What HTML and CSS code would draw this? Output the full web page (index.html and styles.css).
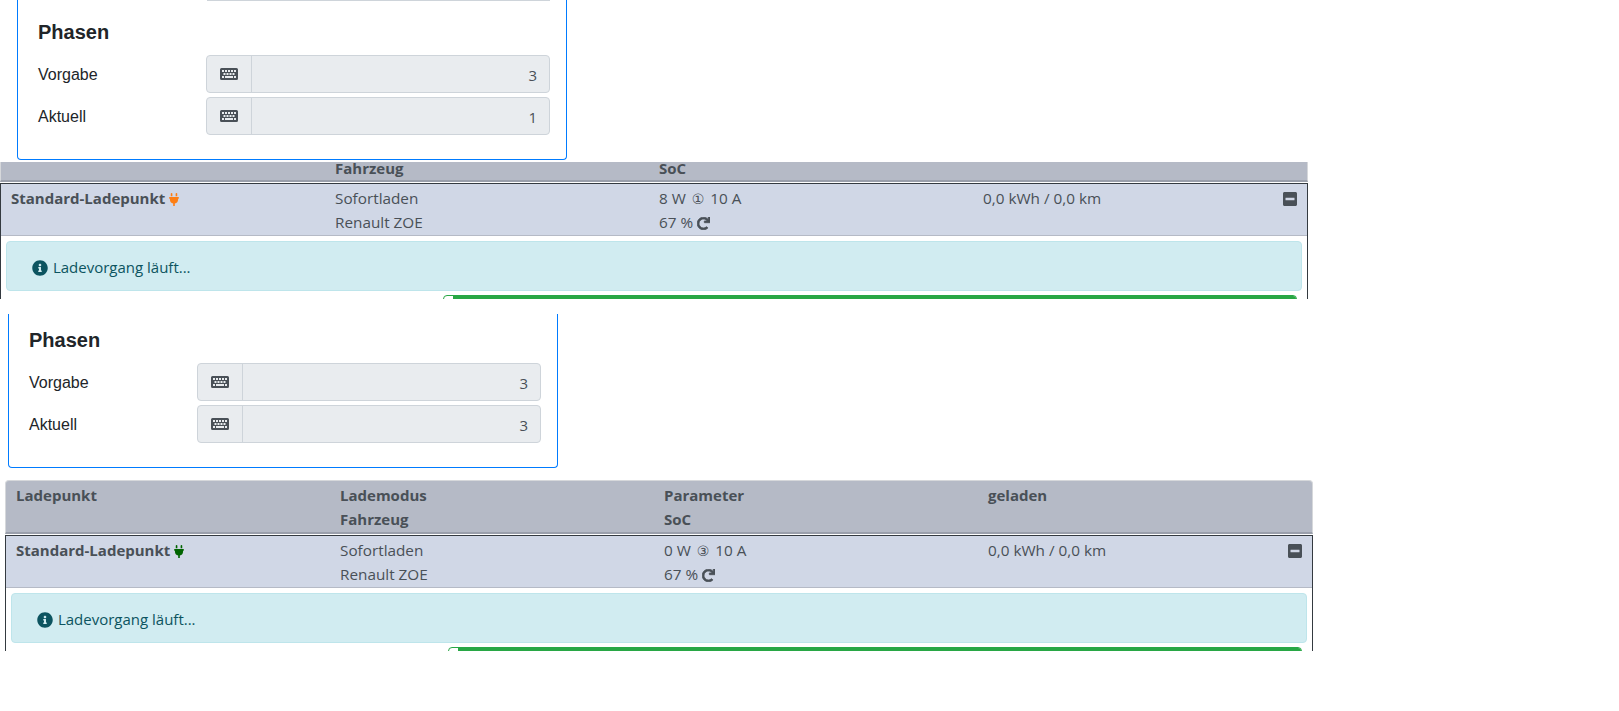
FILE: index.html
```html
<!DOCTYPE html>
<html lang="de">
<head>
    <meta charset="UTF-8">
    <meta name="viewport" content="width=device-width, initial-scale=1.0">
    <title>Ladepunkt</title>
    <link rel="stylesheet" href="styles.css">
</head>
<body>
    <svg class="icon-defs" aria-hidden="true">
        <symbol id="i-keyboard" viewBox="0 0 576 512">
            <path fill-rule="evenodd" d="M48 64h480a48 48 0 0 1 48 48v288a48 48 0 0 1-48 48H48a48 48 0 0 1-48-48V112a48 48 0 0 1 48-48zM64 128v64h64v-64zm96 0v64h64v-64zm96 0v64h64v-64zm96 0v64h64v-64zm96 0v64h64v-64zM112 224v64h64v-64zm96 0v64h64v-64zm96 0v64h64v-64zm96 0v64h64v-64zM64 320v64h64v-64zm96 0v64h256v-64zm288 0v64h64v-64z"/>
        </symbol>
        <symbol id="i-plug" viewBox="0 0 384 512">
            <path d="M320,32a32,32,0,0,0-64,0v96h64Zm48,128H16A16,16,0,0,0,0,176v32a16,16,0,0,0,16,16H32v32A160.07,160.07,0,0,0,160,412.8V512h64V412.8A160.07,160.07,0,0,0,352,256V224h16a16,16,0,0,0,16-16V176A16,16,0,0,0,368,160ZM128,32a32,32,0,0,0-64,0v96h64Z"/>
        </symbol>
        <symbol id="i-info" viewBox="0 0 512 512">
            <path d="M256 8C119.043 8 8 119.083 8 256c0 136.997 111.043 248 248 248s248-111.003 248-248C504 119.083 392.957 8 256 8zm0 110c23.196 0 42 18.804 42 42s-18.804 42-42 42-42-18.804-42-42 18.804-42 42-42zm56 254c0 6.627-5.373 12-12 12h-88c-6.627 0-12-5.373-12-12v-24c0-6.627 5.373-12 12-12h12v-64h-12c-6.627 0-12-5.373-12-12v-24c0-6.627 5.373-12 12-12h64c6.627 0 12 5.373 12 12v100h12c6.627 0 12 5.373 12 12v24z"/>
        </symbol>
        <symbol id="i-minus" viewBox="0 0 448 512">
            <path d="M400 32H48C21.5 32 0 53.5 0 80v352c0 26.5 21.5 48 48 48h352c26.5 0 48-21.5 48-48V80c0-26.5-21.5-48-48-48zM92 296c-6.6 0-12-5.4-12-12v-56c0-6.6 5.4-12 12-12h264c6.6 0 12 5.4 12 12v56c0 6.6-5.4 12-12 12H92z"/>
        </symbol>
        <symbol id="i-redo" viewBox="0 0 512 512">
            <path d="M500.33 0h-47.41a12 12 0 0 0-12 12.57l4 82.76A247.42 247.42 0 0 0 256 8C119.34 8 7.9 119.53 8 256.19 8.1 393.07 119.1 504 256 504a247.1 247.1 0 0 0 166.18-63.91 12 12 0 0 0 .48-17.43l-34-34a12 12 0 0 0-16.38-.55A176 176 0 1 1 402.1 157.8l-101.53-4.87a12 12 0 0 0-12.57 12v47.41a12 12 0 0 0 12 12h200.33a12 12 0 0 0 12-12V12a12 12 0 0 0-12-12z"/>
        </symbol>
    </svg>

    <!-- erster Ausschnitt -->
    <div class="shot shot-first">
        <div class="card">
            <div class="cut-input"></div>
            <h4>Phasen</h4>
            <div class="form-row">
                <label>Vorgabe</label>
                <div class="input-group">
                    <span class="prepend"><svg class="icon-kbd"><use href="#i-keyboard"/></svg></span>
                    <span class="value">3</span>
                </div>
            </div>
            <div class="form-row">
                <label>Aktuell</label>
                <div class="input-group">
                    <span class="prepend"><svg class="icon-kbd"><use href="#i-keyboard"/></svg></span>
                    <span class="value">1</span>
                </div>
            </div>
        </div>

        <div class="lp-table">
            <div class="lp-head lp-head-cut">
                <div class="lp-grid">
                    <div></div>
                    <div>Fahrzeug</div>
                    <div>SoC</div>
                    <div></div>
                </div>
            </div>
            <div class="lp-body">
                <div class="lp-row lp-grid">
                    <div class="lp-name">Standard-Ladepunkt <svg class="icon-plug plug-orange"><use href="#i-plug"/></svg></div>
                    <div>Sofortladen<br>Renault ZOE</div>
                    <div>8 W <span class="circled">①</span> 10 A<br>67 % <svg class="icon-redo"><use href="#i-redo"/></svg></div>
                    <div class="lp-last">0,0 kWh / 0,0 km <svg class="icon-minus"><use href="#i-minus"/></svg></div>
                </div>
                <div class="alert"><svg class="icon-info"><use href="#i-info"/></svg> Ladevorgang läuft...</div>
                <div class="progress"><div class="progress-bar"></div></div>
            </div>
        </div>
    </div>

    <!-- zweiter Ausschnitt -->
    <div class="shot shot-second">
        <div class="card">
            <h4>Phasen</h4>
            <div class="form-row">
                <label>Vorgabe</label>
                <div class="input-group">
                    <span class="prepend"><svg class="icon-kbd"><use href="#i-keyboard"/></svg></span>
                    <span class="value">3</span>
                </div>
            </div>
            <div class="form-row">
                <label>Aktuell</label>
                <div class="input-group">
                    <span class="prepend"><svg class="icon-kbd"><use href="#i-keyboard"/></svg></span>
                    <span class="value">3</span>
                </div>
            </div>
        </div>

        <div class="lp-table">
            <div class="lp-head">
                <div class="lp-grid">
                    <div>Ladepunkt</div>
                    <div>Lademodus<br>Fahrzeug</div>
                    <div>Parameter<br>SoC</div>
                    <div>geladen</div>
                </div>
            </div>
            <div class="lp-body">
                <div class="lp-row lp-grid">
                    <div class="lp-name">Standard-Ladepunkt <svg class="icon-plug plug-green"><use href="#i-plug"/></svg></div>
                    <div>Sofortladen<br>Renault ZOE</div>
                    <div>0 W <span class="circled">③</span> 10 A<br>67 % <svg class="icon-redo"><use href="#i-redo"/></svg></div>
                    <div class="lp-last">0,0 kWh / 0,0 km <svg class="icon-minus"><use href="#i-minus"/></svg></div>
                </div>
                <div class="alert"><svg class="icon-info"><use href="#i-info"/></svg> Ladevorgang läuft...</div>
                <div class="progress"><div class="progress-bar"></div></div>
            </div>
        </div>
    </div>
</body>
</html>
```

FILE: styles.css
```css
body {
    margin: 0;
    background: #fff;
    color: #212529;
    font-family: 'Open Sans', 'Noto Sans', sans-serif;
    font-size: 15.3px;
    line-height: 24px;
}

.icon-defs {
    display: none;
}

.shot {
    overflow: hidden;
}

.shot-first {
    height: 299px;
    margin-bottom: 15px;
}

.shot-second {
    height: 337px;
}

/* Karte mit den Phasen */
.card {
    width: 550px;
    box-sizing: border-box;
    border: 1px solid #007bff;
    border-top: none;
    border-radius: 0 0 4px 4px;
    padding: 0 16px 0 20px;
    font-family: 'Liberation Sans', Arial, sans-serif;
    font-size: 16px;
}

.shot-first .card {
    height: 160px;
    margin-left: 17px;
}

.shot-second .card {
    height: 154px;
    padding-top: 14px;
    margin-left: 8px;
}

.cut-input {
    width: 343px;
    height: 1px;
    margin-left: 169px;
    background: #ced4da;
    margin-bottom: 19px;
}

h4 {
    margin: 0 0 11px;
    font-size: 20px;
    line-height: 24px;
    font-weight: bold;
}

.form-row {
    display: flex;
    align-items: center;
    margin-bottom: 4px;
}

.form-row label {
    width: 169px;
    padding-top: 2px;
}

.input-group {
    display: flex;
    width: 345px;
    height: 38px;
    box-sizing: border-box;
    border: 1px solid #ced4da;
    border-radius: 4px;
    background: #e9ecef;
}

.prepend {
    width: 44px;
    flex: none;
    display: flex;
    align-items: center;
    justify-content: center;
    border-right: 1px solid #ced4da;
}

.value {
    flex-grow: 1;
    padding-right: 12px;
    text-align: right;
    line-height: 38px;
    color: #495057;
    font-family: 'Open Sans', sans-serif;
    font-size: 15px;
}

.icon-kbd {
    width: 18px;
    height: 16px;
    fill: #495057;
}

/* Tabelle Ladepunkte */
.lp-table {
    width: 1308px;
    color: #495057;
}

.shot-first .lp-table {
    margin: 2px 0 0 0;
}

.shot-second .lp-table {
    margin: 12px 0 0 5px;
}

.lp-grid {
    display: grid;
    grid-template-columns: repeat(4, 324px);
    padding-left: 10px;
    box-sizing: border-box;
}

.lp-head {
    background: #b5bac6;
    border: 1px solid #d6d8db;
    border-bottom: 2px solid #9a9fab;
    border-radius: 4px 4px 0 0;
    padding-top: 2px;
    font-size: 15px;
    font-weight: 700;
    height: 54px;
    box-sizing: border-box;
}

.lp-head-cut {
    height: 20px;
    padding-top: 0;
    border-top: none;
    border-radius: 0;
    line-height: 12px;
}

.lp-body {
    margin-top: 1px;
    border: 1px solid #343a40;
    border-bottom: none;
}

.lp-row {
    height: 52px;
    box-sizing: border-box;
    padding-top: 2px;
    background: #d0d7e6;
    border-bottom: 1px solid #b5bac6;
}

.lp-name {
    font-weight: 700;
    font-size: 15px;
}

.lp-last {
    display: flex;
    justify-content: space-between;
    padding-right: 10px;
}

.circled {
    margin: 0 2px;
    font-family: 'DejaVu Sans', sans-serif;
    font-size: 14px;
    line-height: 1;
}

.icon-plug {
    width: 10px;
    height: 13px;
    vertical-align: -2px;
}

.plug-orange {
    fill: #fd7e14;
}

.plug-green {
    fill: #006400;
}

.icon-redo {
    width: 13px;
    height: 13px;
    vertical-align: -2px;
    fill: #495057;
    stroke: #495057;
    stroke-width: 30px;
}

.icon-minus {
    width: 14px;
    height: 16px;
    margin-top: 5px;
    fill: #495057;
}

.alert {
    margin: 5px 5px 0;
    height: 50px;
    box-sizing: border-box;
    padding-left: 25px;
    border: 1px solid #bee5eb;
    border-radius: 4px;
    background: #d1ecf1;
    color: #0c5460;
    font-size: 15px;
    line-height: 50px;
}

.icon-info {
    width: 16px;
    height: 16px;
    margin-right: 1px;
    vertical-align: -3px;
    fill: #0c5460;
}

.progress {
    margin: 4px 4px 0 442px;
    width: 854px;
    height: 16px;
    box-sizing: border-box;
    border: 1px solid #28a745;
    border-radius: 4px;
    background: #fff;
    overflow: hidden;
}

.progress-bar {
    height: 100%;
    margin-left: 9px;
    background: #28a745;
}
```
